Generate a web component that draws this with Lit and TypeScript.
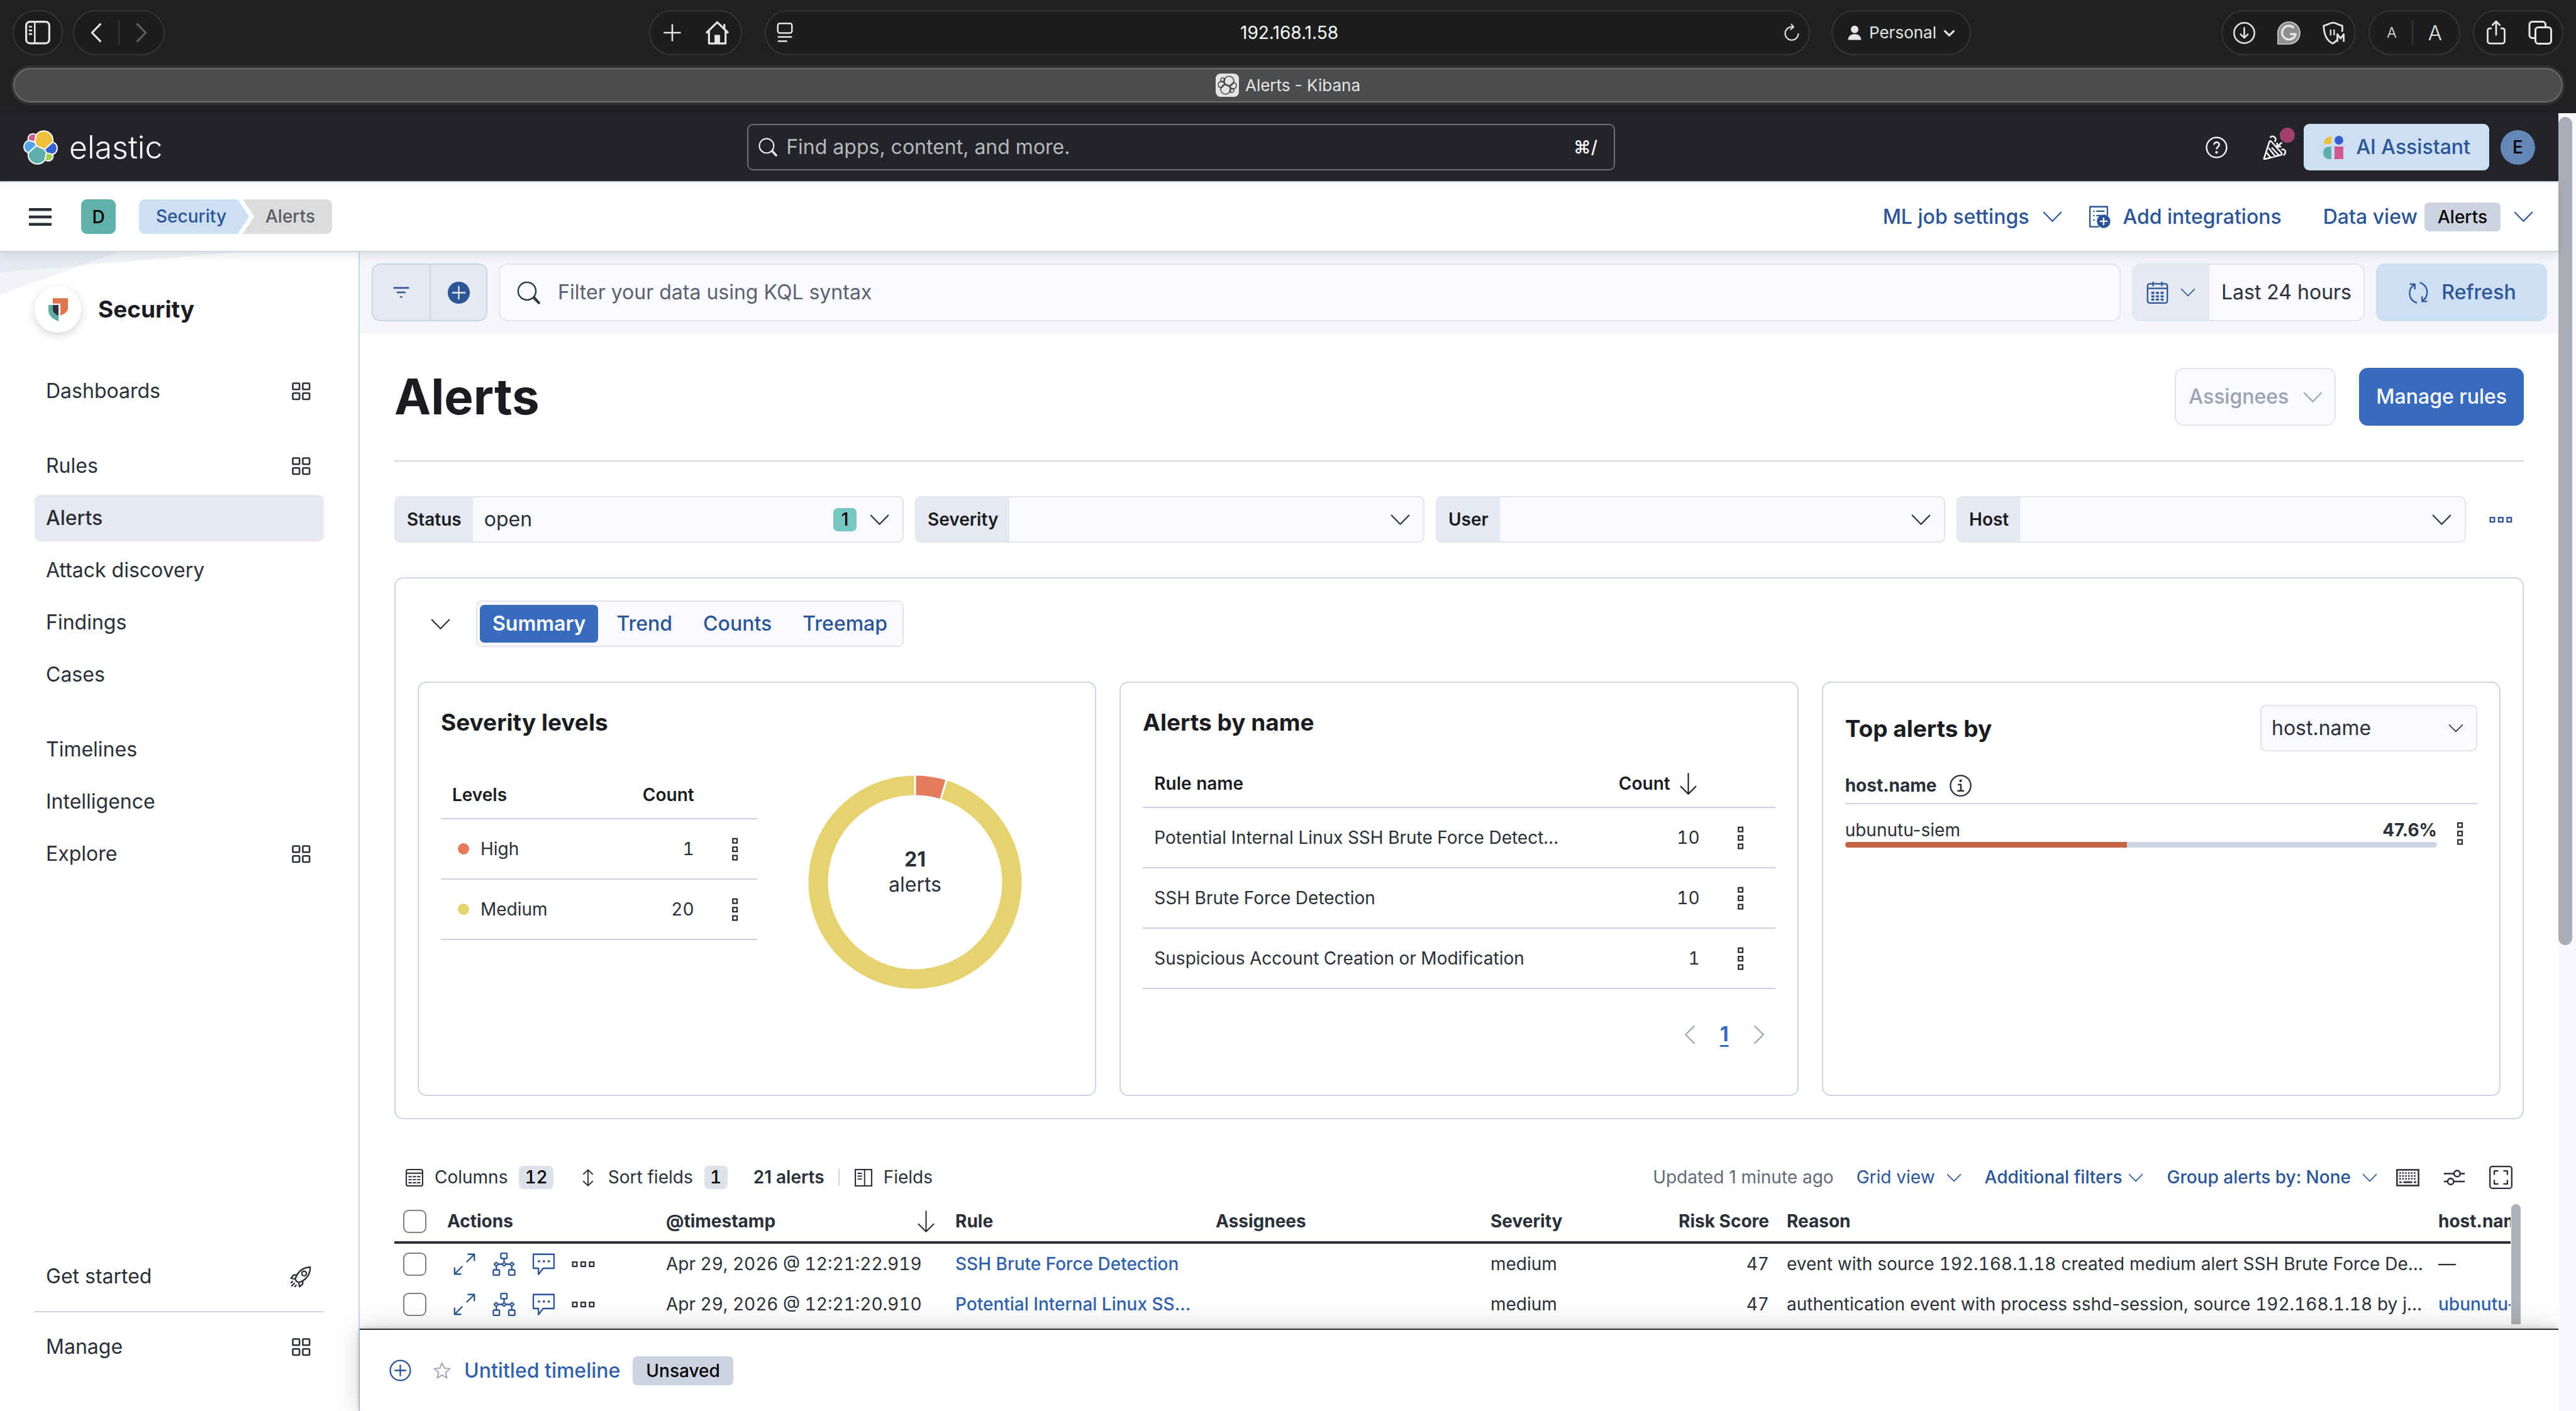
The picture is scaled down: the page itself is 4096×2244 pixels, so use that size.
import { LitElement, html, svg, css, nothing, type TemplateResult, type SVGTemplateResult } from "lit";
import { customElement } from "lit/decorators.js";

/* ---------- icons ---------- */

const line = (d: string, w = 1) =>
  svg`<path d=${d} fill="none" stroke="currentColor" stroke-width=${w} stroke-linejoin="round"></path>`;
const solid = (d: string) => svg`<path d=${d} fill="currentColor"></path>`;
const box = (x: number, y: number, w: number, h: number, r = 0, sw = 1) =>
  svg`<rect x=${x} y=${y} width=${w} height=${h} rx=${r} fill="none" stroke="currentColor" stroke-width=${sw}></rect>`;

const glyphs: Record<string, SVGTemplateResult> = {
  chevDown: line("M1.8 4.8 8 11.1l6.2-6.3", 0.9),
  chevLeft: line("M10.6 1.8 4.4 8l6.2 6.2", 0.9),
  chevRight: line("M5.4 1.8 11.6 8l-6.2 6.2", 0.9),
  arrowDown: line("M8 .6v14.2M2.6 9.6 8 15l5.4-5.4", 0.9),
  menu: solid("M0 1.8h16v2H0zM0 7h16v2H0zM0 12.2h16v2H0z"),
  apps: svg`${box(2.4, 2.4, 4.6, 4.2, 0.6, 1.1)}${box(9.3, 2.4, 4.6, 4.2, 0.6, 1.1)}${box(2.4, 9.2, 4.6, 4.2, 0.6, 1.1)}${box(9.3, 9.2, 4.6, 4.2, 0.6, 1.1)}`,
  search: svg`<circle cx="6.9" cy="6.9" r="6.1" fill="none" stroke="currentColor" stroke-width="1"></circle>${line("M11.1 11.6 15 15.5l.5-.5-3.7-4.3", 0.9)}`,
  filter: solid("M1 3.2h14v1.5H1zM4 7.3h8v1.4H4zM7 11.4h2v1.4H7z"),
  plusSolid: svg`<circle cx="8" cy="8" r="7.6" fill="currentColor"></circle><path d="M8 3.4v9.2M3.4 8h9.2" stroke="#e6e9f2" stroke-width="1"></path>`,
  plusCircle: svg`<circle cx="8" cy="8" r="6.9" fill="none" stroke="currentColor"></circle>${line("M8 4v8M4 8h8")}`,
  calendar: svg`${box(1.2, 1.9, 13.6, 13.2, 1.4)}${line("M1.2 5h13.6M5 .4v3.2M11 .4v3.2")}${solid("M3.8 7.4h2v1.5h-2zM7 7.4h2v1.5H7zM10.2 7.4h2v1.5h-2zM3.8 9.8h2v1.4h-2zM7 9.8h2v1.4H7zM10.2 9.8h2v1.4h-2zM3.8 12h2v1.4h-2zM7 12h2v1.4H7zM10.2 12h2v1.4h-2z")}`,
  refresh: svg`${line("M2 2.1h3.5v3.6M5.3 2.4A7 7 0 0 0 5 14.2l2 .8")}${line("M14 14h-3.5v-3.5M10.6 13.7A7 7 0 0 0 11 2L9 1")}`,
  help: svg`<circle cx="8" cy="8" r="6.9" fill="none" stroke="currentColor" stroke-width="1"></circle>${line("M6.3 6.2c0-2.4 3.5-2.4 3.5 0C9.8 7.6 8 7.6 8 9.2", 1.1)}<circle cx="8" cy="11.4" r=".9" fill="currentColor"></circle>`,
  cheer: svg`${line("M1.6 15.2 5 4.6c.2-.6.8-.7 1.2-.2l6.4 7.2c.5.6.3 1.2-.4 1.4L2.2 15.6c-.6.1-.8 0-.6-.4ZM3.4 11.6l2.2 3M4.6 8.6l4 5.2M6.4 8.2l4.6 5", 1)}${line("M5.4 1.9c2-1.9 4.6.2 3 2.7M9.9 5.2v2.5h2.6M10 7.6l3-2.6M12.6 9.6c2.6-1 3.6 2 1.2 3.6", 1)}`,
  addData: svg`${line("M8 15H1.8V1.2h12v6M4 4.3h1M6.2 4.3h5.6M4 7.3h1M6.2 7.3h3.6M4 10.3h1", 1)}<circle cx="11.2" cy="11.2" r="4.6" fill="currentColor"></circle><path d="M11.2 8.6v5.2M8.6 11.2h5.2" stroke="#fff" stroke-width="1"></path>`,
  dotsV: svg`${box(6.6, 0.8, 2.9, 2.9)}${box(6.6, 6.6, 2.9, 2.9)}${box(6.6, 12.4, 2.9, 2.9)}`,
  dotsH: svg`${box(0.7, 6.6, 2.9, 2.9)}${box(6.5, 6.6, 2.9, 2.9)}${box(12.3, 6.6, 2.9, 2.9)}`,
  info: svg`<circle cx="8" cy="8" r="7" fill="none" stroke="currentColor"></circle>${line("M6.2 7.2h2v4.4M5.8 11.6h4.6", 1.1)}<circle cx="8" cy="4.6" r=".95" fill="currentColor"></circle>`,
  table: svg`${box(0.6, 0.6, 14.8, 14.8, 1.6, 1.2)}${line("M.6 3.9h14.8", 1.2)}<path d="M2.6 7h10.8M2.6 9.8h10.8M2.6 12.6h10.8" stroke="currentColor" stroke-width="1.1" stroke-dasharray="3 .9"></path>`,
  sort: line("M8 .8v14.4M3.6 5 8 .8 12.4 5M3.6 11 8 15.2l4.4-4.2", 1.1),
  fields: svg`${box(0.6, 0.6, 14.8, 14.8, 0, 1.2)}${line("M9 .6v14.8M2.6 4h4M2.6 6.6h4M2.6 9.2h4", 1.1)}`,
  keyboard: svg`${box(0.6, 2.8, 14.8, 10.8, 0, 1.1)}<path d="M2.2 5h11.6M2.2 7h11.6M2.2 9h11.6" stroke="currentColor" stroke-width="1.1" stroke-dasharray="1.1 .9"></path>${line("M2.2 11.3h1.6M5 11.3h6M12.2 11.3h1.6", 1.1)}`,
  controls: svg`${line("M.8 5.4h7M12 5.4h3.2M.8 10.8h2.6M7.6 10.8h7.6", 1.1)}<circle cx="9.9" cy="5.4" r="2.1" fill="none" stroke="currentColor" stroke-width="1.1"></circle><circle cx="5.5" cy="10.8" r="2.1" fill="none" stroke="currentColor" stroke-width="1.1"></circle>`,
  fullscreen: svg`${box(0.5, 0.5, 15, 15, 1.6, 1)}${line("M3.5 6.3V3.5h2.8M9.7 3.5h2.8v2.8M12.5 9.7v2.8H9.7M6.3 12.5H3.5V9.7", 1)}`,
  expand: line("M10.2 1.2h4.6v4.6M14.6 1.4 9.4 6.6M5.8 14.8H1.2v-4.6M1.4 14.6l5.2-5.2", 1),
  analyze: svg`${box(5.8, 0.5, 4.2, 3.6, 0.5)}${box(0.6, 11.9, 4.2, 3.6, 0.5)}${box(11.2, 11.9, 4.2, 3.6, 0.5)}${line("M8 4.1v2.6M2.7 9.2v2.7M13.3 9.2v2.7M3.8 8h2.8M9.4 8h2.8")}${line("M1.2 8l1.4-1.3L4 8 2.6 9.3zM6.6 8 8 6.7 9.4 8 8 9.3zM12 8l1.4-1.3L14.8 8l-1.4 1.3z")}`,
  comment: svg`${line("M.9 1.2h14.2v9.6H7.6L4.4 15v-4.2H.9Z", 1)}<path d="M4 6h8.4" stroke="currentColor" stroke-width="1.5" stroke-dasharray="1.5 1.9"></path>`,
  star: line("M8 1.4l1.9 4.4 4.7.4-3.6 3.2 1.1 4.7L8 11.6l-4.1 2.5L5 9.4 1.4 6.2l4.7-.4z", 1),
  rocket: svg`${line("M5 11.2 4 9.6C5.6 5 8.8 1.6 14.4 1.4 14.4 7 11 10.4 6.6 12zM5.6 6.6 2.8 6.9 1.2 9l2.8.6M9.4 10.4l-.3 2.8L7 14.8l-.6-2.8", 1)}<circle cx="10.2" cy="5.8" r="1.6" fill="none" stroke="currentColor"></circle>${line("M3.8 12.2 1.4 14.6M2.4 11 1 12.4M5 13.6l-1.4 1.4", 1)}`,

  /* browser toolbar */
  panel: svg`${box(1, 1.4, 14, 13, 2.2, 1.2)}${line("M6.2 1.4v13", 1)}${line("M2.6 4.4h2M2.6 6.6h2M2.6 8.8h2", 1)}`,
  back: line("M10.8 1.6 4.6 8l6.2 6.4", 1.4),
  forward: line("M5.2 1.6 11.4 8l-6.2 6.4", 1.4),
  plus: line("M8 1.6v12.8M1.6 8h12.8", 1.2),
  home: svg`${line("M.8 8 8 1l7.2 7M2.6 6.6v8.2h10.8V6.6M12.6 2.2v3", 1.3)}${solid("M6.2 9.2h3.6v5.4H6.2z")}`,
  reader: svg`${box(3, 1.4, 10, 6.8, 1.4, 1.1)}${line("M3 11h10M3 14h6.6", 1.1)}`,
  reload: line("M9 3.2A5.6 5.6 0 1 0 13.6 8.6M7.4.6l2.2 2.6-2.8 2.2", 1.1),
  person: solid("M8 1a3.3 3.3 0 0 1 0 7.4A3.5 3.5 0 0 1 8 1zM1.6 15c0-7.4 12.8-7.4 12.8 0z"),
  caret: line("M2 5l6 6 6-6", 2.4),
  download: svg`<circle cx="8" cy="8" r="7" fill="none" stroke="currentColor" stroke-width="1.1"></circle>${line("M8 4v7.2M5.2 8.6 8 11.3l2.8-2.7", 1.1)}`,
  grammar: svg`<path d="M8 .4a7.6 7.6 0 1 1 0 15.2H.4V8A7.6 7.6 0 0 1 8 .4z" fill="#8d8e8e" stroke="#e4e5e5" stroke-width=".6"></path>${line("M11.4 4.5A4.7 4.7 0 1 0 12.6 8.8H8.8", 1.5)}`,
  shield: svg`${line("M10.6 12.6C9.8 13.6 9 14.4 7.4 15.2 3.6 13.4 1.4 9 1.2 3 3.4 2.8 5.4.9 7.6.9S11.8 2.8 14 3c.2 1.4.2 2.6-.2 4.2", 1.2)}${line("M6 5.6v4M8.4 5.6v4", 1)}${line("M10.6 14V8.8l2.2 3 2.2-3V14", 1.2)}`,
  share: svg`${line("M5.2 5.2H4a1.4 1.4 0 0 0-1.4 1.4v6.8A1.4 1.4 0 0 0 4 14.8h8a1.4 1.4 0 0 0 1.4-1.4V6.6A1.4 1.4 0 0 0 12 5.2h-1.2M8 9.8V.9M5.4 3.4 8 .8l2.6 2.6", 1.1)}`,
  tabs: svg`${box(5, 4.6, 10, 10.4, 1.8, 1.2)}${line("M5 11.4H3a1.8 1.8 0 0 1-1.8-1.8V2.8A1.8 1.8 0 0 1 3 1h6.6a1.8 1.8 0 0 1 1.8 1.8v1.8", 1.2)}`,
};

const icon = (name: string, size = 37) =>
  html`<svg class="icon" width=${size} height=${size} viewBox="0 0 16 16" aria-hidden="true">${glyphs[name]}</svg>`;

const clusterShapes: [string, string][] = [
  ["#efbf3b", "M12.58 13.787l7.002 3.211 7.066-6.213c.102-.512.152-1.025.152-1.557 0-4.338-3.54-7.863-7.871-7.863a7.86 7.86 0 0 0-6.484 3.417l-1.176 6.133z"],
  ["#5fafae", "M5.333 21.228a7.96 7.96 0 0 0-.152 1.58c0 4.35 3.526 7.875 7.877 7.875 2.605 0 5.042-1.296 6.507-3.468l1.166-6.105-1.556-2.986-7.03-3.21z"],
  ["#d0588e", "M5.288 9.066l4.8 1.137 1.051-5.478a3.79 3.79 0 0 0-2.298-.779c-2.09 0-3.79 1.7-3.79 3.79 0 .452.08.908.237 1.33z"],
  ["#57a1ea", "M4.871 10.212c-2.143.71-3.64 2.777-3.64 5.035 0 2.2 1.358 4.163 3.399 4.942l6.733-6.108-1.236-2.651z"],
  ["#a2cf4b", "M20.862 27.144a3.8 3.8 0 0 0 2.285.78 3.791 3.791 0 0 0 3.785-3.79c0-.456-.08-.912-.236-1.318l-4.793-1.123z"],
  ["#355fd0", "M21.849 20.524l5.276 1.237a5.33 5.33 0 0 0 3.64-5.04c0-2.194-1.36-4.156-3.404-4.936l-6.903 6.06z"],
];

const elasticMark = html`<svg class="icon" width="55" height="55" viewBox="0 0 32 32" aria-hidden="true">
  ${clusterShapes.map(([, d]) => svg`<path d=${d} fill="#fff" stroke="#fff" stroke-width="2.4" stroke-linejoin="round"></path>`)}
  ${clusterShapes.map(([c, d]) => svg`<path d=${d} fill=${c}></path>`)}
</svg>`;

const favicon = html`<svg class="icon" width="37" height="37" viewBox="-3 -3 38 38" aria-hidden="true">
  <rect x="-3" y="-3" width="38" height="38" rx="8" fill="#e2e3e3"></rect>
  ${clusterShapes.map(([, d]) => svg`<path d=${d} fill="#e2e3e3" stroke="#46484a" stroke-width="1.6" stroke-linejoin="round"></path>`)}
</svg>`;

const securityMark = html`<svg class="icon" width="31" height="37" viewBox="0 0 27 32" aria-hidden="true">
  <path d="M6 0H27V13.5C27 18.5 22.5 22 16.6 24V7.6H6Z" fill="#dd754e"></path>
  <path d="M0 9.4H6V16C6 19.8 9.6 22.6 14 24.4V32C6 29 0 24 0 16.6Z" fill="#5cada3"></path>
  <path d="M6 9.4H14V24.4C9.6 22.6 6 19.8 6 16Z" fill="#30333d"></path>
</svg>`;

const assistantMark = html`<svg class="icon" width="33" height="37" viewBox="0 0 33 37" aria-hidden="true">
  <path d="M14 1v12H2C2 6 7 1 14 1Z" fill="#efbf3b"></path>
  <circle cx="26" cy="7" r="7" fill="#355fd0"></circle>
  <path d="M14 17v20H11C5 37 1 33 1 27s4-10 10-10Z" fill="#5fafae"></path>
  <path d="M19 17h14v20H19Z" fill="#d0588e"></path>
</svg>`;

/* ---------- data ---------- */

interface NavItem { label: string; apps?: boolean; active?: boolean }

const navGroups: NavItem[][] = [
  [{ label: "Dashboards", apps: true }],
  [
    { label: "Rules", apps: true },
    { label: "Alerts", active: true },
    { label: "Attack discovery" },
    { label: "Findings" },
    { label: "Cases" },
  ],
  [{ label: "Timelines" }, { label: "Intelligence" }, { label: "Explore", apps: true }],
];

const filters = [
  { label: "Status", value: "open", count: 1 },
  { label: "Severity", value: "", count: 0 },
  { label: "User", value: "", count: 0 },
  { label: "Host", value: "", count: 0 },
];

const levels = [
  { name: "High", count: 1, cls: "high" },
  { name: "Medium", count: 20, cls: "medium" },
];

const rules = [
  { name: "Potential Internal Linux SSH Brute Force Detected", count: 10 },
  { name: "SSH Brute Force Detection", count: 10 },
  { name: "Suspicious Account Creation or Modification", count: 1 },
];

const hosts = [{ name: "ubunutu-siem", percent: 47.6 }];

const alerts = [
  {
    time: "Apr 29, 2026 @ 12:21:22.919",
    rule: "SSH Brute Force Detection",
    severity: "medium",
    risk: 47,
    reason: ["event with source ", "192.168.1.18", " created medium alert SSH Brute Force De…"],
    host: "",
  },
  {
    time: "Apr 29, 2026 @ 12:21:20.910",
    rule: "Potential Internal Linux SSH Brute Force Detected",
    severity: "medium",
    risk: 47,
    reason: ["authentication event with process sshd-session, source ", "192.168.1.18", " by j…"],
    host: "ubunutu-siem",
  },
];

/* ---------- shared styles ---------- */

const base = css`
  :host {
    display: block;
    font-family: Inter, "Liberation Sans", sans-serif;
    font-size: 32px;
    line-height: 46px;
    color: #2b2f38;
  }
  * { box-sizing: border-box; }
  button, input, select {
    font: inherit;
    color: inherit;
    background: none;
    border: 0;
    margin: 0;
    padding: 0;
  }
  button {
    display: flex;
    align-items: center;
    white-space: nowrap;
  }
  a { color: inherit; text-decoration: none; }
  h1, h2, ul { margin: 0; padding: 0; }
  ul { list-style: none; }
  table { border-spacing: 0; table-layout: fixed; }
  th { text-align: left; }
  .icon { display: block; flex: none; }
  .blue { color: #2b5596; }
  .link { color: #3061ab; font-weight: 500; }
  .grow { flex: 1; }
`;

/* ---------- browser frame ---------- */

@customElement("browser-bar")
export class BrowserBar extends LitElement {
  static styles = [
    base,
    css`
      :host { background: #1f2022; color: #e4e5e5; font-size: 26px; line-height: 32px; }
      .bar { display: flex; align-items: center; height: 104px; padding: 0 20px; }
      .side { display: flex; gap: 16px; flex: none; width: 1012px; }
      .side.end { justify-content: flex-end; gap: 20px; width: 942px; }
      .pill {
        display: flex;
        align-items: center;
        justify-content: center;
        height: 72px;
        flex: none;
        border: 2px solid #343537;
        border-radius: 36px;
        background: #1c1e1d;
      }
      .toggle { width: 80px; }
      .nav { width: 146px; gap: 16px; }
      .rule { width: 2px; height: 40px; background: #343537; }
      .dim { color: #5d5f60; }
      .new { width: 148px; gap: 35px; margin-right: 36px; }
      .address { flex: 1; padding: 0 12px; justify-content: space-between; margin-right: 34px; }
      .address input { flex: 1; min-width: 0; text-align: center; color: #fff; font-size: 28px; }
      .profile { width: 222px; }
      .profile button { gap: 10px; }
      .ext { width: 214px; gap: 34px; }
      .size { width: 146px; gap: 24px; font-weight: 300; }
      .small { font-size: 23px; }
      .large { font-size: 33px; }
      .out { width: 144px; gap: 30px; }
      .tabs { padding: 0 17px 13px; }
      .tab {
        display: flex;
        align-items: center;
        justify-content: center;
        gap: 10px;
        height: 63px;
        border: 4px solid #303133;
        border-radius: 32px;
        background: #4b4c4e;
        box-shadow: inset 0 0 0 2px #6a6b6d;
      }
    `,
  ];

  render() {
    return html`
      <div class="bar">
        <div class="side">
          <div class="pill toggle"><button aria-label="Show sidebar">${icon("panel", 42)}</button></div>
          <div class="pill nav">
            <button aria-label="Back">${icon("back", 36)}</button>
            <span class="rule"></span>
            <button class="dim" aria-label="Forward">${icon("forward", 36)}</button>
          </div>
        </div>
        <div class="pill new">
          <button aria-label="New tab">${icon("plus", 34)}</button>
          <button aria-label="Home">${icon("home", 39)}</button>
        </div>
        <div class="pill address">
          <button aria-label="Reader">${icon("reader", 36)}</button>
          <input aria-label="Address" value="192.168.1.58" />
          <button aria-label="Reload">${icon("reload", 30)}</button>
        </div>
        <div class="pill profile">
          <button>${icon("person", 26)}<span>Personal</span>${icon("caret", 21)}</button>
        </div>
        <div class="side end">
          <div class="pill ext">
            <button aria-label="Downloads">${icon("download", 37)}</button>
            <button aria-label="Writing assistant">${icon("grammar", 37)}</button>
            <button aria-label="Content blocker">${icon("shield", 37)}</button>
          </div>
          <div class="pill size">
            <button class="small">A</button>
            <span class="rule"></span>
            <button class="large">A</button>
          </div>
          <div class="pill out">
            <button aria-label="Share">${icon("share", 40)}</button>
            <button aria-label="Tab overview">${icon("tabs", 40)}</button>
          </div>
        </div>
      </div>
      <div class="tabs"><div class="tab">${favicon}<span>Alerts - Kibana</span></div></div>
    `;
  }
}

/* ---------- global headers ---------- */

@customElement("app-header")
export class AppHeader extends LitElement {
  static styles = [
    base,
    css`
      :host { position: relative; z-index: 2; }
      .top {
        display: flex;
        align-items: center;
        justify-content: space-between;
        height: 110px;
        padding: 0 37px;
        background: #232429;
        border-bottom: 2px solid #cdd5e3;
        color: #fff;
      }
      .brand { display: flex; align-items: center; gap: 18px; min-width: 232px; font-size: 50px; font-weight: 300; }
      .find {
        display: flex;
        align-items: center;
        gap: 14px;
        width: 1380px;
        height: 74px;
        padding: 0 26px 0 16px;
        border: 2px solid #6d6e72;
        border-radius: 9px;
      }
      .find input { flex: 1; min-width: 0; }
      .find input::placeholder { color: #b6b7bb; opacity: 1; }
      .keys { font-size: 28px; font-weight: 500; }
      .tools { display: flex; align-items: center; }
      .tool { position: relative; justify-content: center; width: 74px; height: 74px; margin-right: 18px; }
      .news { margin-right: 10px; }
      .dot { position: absolute; top: 6px; right: 4px; width: 24px; height: 24px; border-radius: 50%; background: #a0426c; }
      .assistant {
        gap: 20px;
        height: 74px;
        padding: 0 30px;
        border-radius: 9px;
        background: #cddff3;
        color: #2b5596;
        font-weight: 500;
      }
      .avatar {
        justify-content: center;
        width: 55px;
        height: 55px;
        margin-left: 18px;
        border-radius: 50%;
        background: #6388b8;
        color: #000;
        font-size: 28px;
        font-weight: 500;
      }
      .sub {
        display: flex;
        align-items: center;
        height: 111px;
        padding: 0 37px 0 46px;
        background: #fff;
        border-bottom: 2px solid #cdd5e3;
        box-shadow: 0 4px 16px rgba(43, 57, 79, 0.12);
        font-weight: 500;
      }
      .space {
        justify-content: center;
        width: 55px;
        height: 55px;
        margin: 0 37px 0 47px;
        border-radius: 9px;
        background: #60b1a9;
        color: #000;
        font-size: 28px;
      }
      .crumbs { display: flex; font-size: 28px; line-height: 55px; }
      .crumb { padding: 0 36px 0 27px; background: #cddff3; border-radius: 9px 0 0 9px; clip-path: polygon(0 0, calc(100% - 18px) 0, 100% 50%, calc(100% - 18px) 100%, 0 100%); }
      .crumb.last { margin-left: -10px; padding: 0 27px 0 36px; background: #dcdcde; color: #5a5c62; border-radius: 0 9px 9px 0; clip-path: polygon(0 0, 100% 0, 100% 100%, 0 100%, 18px 50%); }
      .action { gap: 19px; margin-left: 37px; }
      .views { margin-left: 66px; gap: 0; }
      .badge { margin: 0 18px 0 11px; padding: 0 21px; border-radius: 7px; background: #cdd3e1; color: #000; font-size: 28px; line-height: 46px; }
    `,
  ];

  render() {
    return html`
      <header class="top">
        <a class="brand" href="#">${elasticMark}<span>elastic</span></a>
        <label class="find">
          ${icon("search", 30)}
          <input type="search" placeholder="Find apps, content, and more." aria-label="Find apps, content, and more." />
          <span class="keys">⌘/</span>
        </label>
        <div class="tools">
          <button class="tool" aria-label="Help">${icon("help")}</button>
          <button class="tool news" aria-label="News">${icon("cheer", 40)}<span class="dot"></span></button>
          <button class="assistant">${assistantMark}AI Assistant</button>
          <button class="avatar">E</button>
        </div>
      </header>
      <div class="sub">
        <button aria-label="Toggle navigation">${icon("menu", 36)}</button>
        <button class="space">D</button>
        <nav class="crumbs">
          <a class="crumb blue" href="#">Security</a>
          <a class="crumb last" href="#">Alerts</a>
        </nav>
        <span class="grow"></span>
        <button class="action blue">ML job settings${icon("chevDown")}</button>
        <button class="action blue">${icon("addData")}Add integrations</button>
        <button class="action views blue">Data view<span class="badge">Alerts</span>${icon("chevDown")}</button>
      </div>
    `;
  }
}

/* ---------- side navigation ---------- */

@customElement("side-nav")
export class SideNav extends LitElement {
  static styles = [
    base,
    css`
      :host { flex: none; width: 572px; border-right: 2px solid #cdd5e3; background: #fff; }
      .nav { position: relative; display: flex; flex-direction: column; height: 100%; padding: 54px 55px 65px; }
      .rays { position: absolute; top: 0; left: 0; }
      .solution { position: relative; display: flex; align-items: center; gap: 27px; margin-bottom: 56px; font-size: 37px; font-weight: 700; color: #1a1c21; }
      .disc {
        display: flex;
        align-items: center;
        justify-content: center;
        width: 74px;
        height: 74px;
        border-radius: 50%;
        background: #fff;
        box-shadow: 0 4px 14px rgba(43, 57, 79, 0.22);
      }
      .group { display: flex; flex-direction: column; gap: 9px; margin-bottom: 45px; }
      .item { display: flex; align-items: center; justify-content: space-between; height: 74px; padding: 0 18px; border-radius: 9px; }
      .active { background: #e6e9f2; font-weight: 500; }
      .foot { margin-top: auto; }
      .sep { height: 2px; margin: 18px 0; background: #cdd5e3; }
    `,
  ];

  private item({ label, apps, active }: NavItem) {
    return html`<li><a class="item ${active ? "active" : ""}" href="#">${label}${apps ? icon("apps") : nothing}</a></li>`;
  }

  render() {
    return html`
      <nav class="nav">
        <svg class="rays" width="400" height="70" viewBox="0 0 400 70" aria-hidden="true">
          <path d="M0 0H188L0 68Z" fill="#b7c2d8" fill-opacity=".2"></path>
          <path d="M0 0H379L0 32Z" fill="#b7c2d8" fill-opacity=".2"></path>
        </svg>
        <div class="solution"><span class="disc">${securityMark}</span>Security</div>
        ${navGroups.map((g) => html`<ul class="group">${g.map((i) => this.item(i))}</ul>`)}
        <div class="foot">
          <a class="item" href="#">Get started${icon("rocket")}</a>
          <div class="sep"></div>
          <a class="item" href="#">Manage${icon("apps")}</a>
        </div>
      </nav>
    `;
  }
}

/* ---------- query bar ---------- */

@customElement("query-bar")
export class QueryBar extends LitElement {
  static styles = [
    base,
    css`
      .bar { display: flex; gap: 18px; padding: 18px 18px 19px 19px; background: #f5f6fa; }
      .pair { display: flex; height: 92px; border: 2px solid #ccd3e3; border-radius: 14px; background: #e6e9f2; color: #2b5596; }
      .pair button { justify-content: center; width: 90px; }
      .pair button + button { border-left: 2px solid #ccd3e3; }
      .kql, .date { display: flex; align-items: center; height: 92px; border: 2px solid #e2e5eb; border-radius: 14px; background: #f9fafe; overflow: hidden; }
      .kql { flex: 1; gap: 28px; padding: 0 27px; }
      .kql input { flex: 1; min-width: 0; }
      .kql input::placeholder { color: #5c6170; opacity: 1; }
      .quick { gap: 16px; height: 92px; padding: 0 20px; background: #e6e9f2; color: #2b5596; }
      .range { padding: 0 19px; }
      .refresh { justify-content: center; gap: 18px; width: 272px; height: 92px; border-radius: 14px; background: #cddff3; color: #2b5596; font-weight: 500; }
    `,
  ];

  render() {
    return html`
      <div class="bar">
        <div class="pair">
          <button aria-label="Saved query menu">${icon("filter", 28)}</button>
          <button aria-label="Add filter">${icon("plusSolid")}</button>
        </div>
        <label class="kql">
          ${icon("search")}
          <input type="text" placeholder="Filter your data using KQL syntax" aria-label="Filter your data using KQL syntax" />
        </label>
        <div class="date">
          <button class="quick" aria-label="Date quick select">${icon("calendar")}${icon("chevDown", 28)}</button>
          <button class="range">Last 24 hours</button>
        </div>
        <button class="refresh">${icon("refresh")}Refresh</button>
      </div>
    `;
  }
}

/* ---------- summary panel ---------- */

@customElement("summary-panel")
export class SummaryPanel extends LitElement {
  static styles = [
    base,
    css`
      .panel { padding: 35px; border: 2px solid #cdd5e6; border-radius: 14px; }
      .tabs { display: flex; align-items: center; gap: 37px; margin-bottom: 55px; }
      .fold { justify-content: center; width: 55px; margin: 0 1px 0 9px; }
      .set { display: flex; gap: 9px; padding: 5px 4px; border: 2px solid #e2e5eb; border-radius: 9px; background: #f9fafe; margin-left: -9px; }
      .set button { height: 60px; padding: 0 20px; border-radius: 7px; color: #2b5596; font-weight: 500; }
      .set .on { background: #386bbe; color: #fff; font-weight: 600; }
      .cards { display: grid; grid-template-columns: repeat(3, minmax(0, 1fr)); gap: 37px; min-height: 659px; }
      .card { display: flex; flex-direction: column; padding: 35px; border: 2px solid #cdd5e6; border-radius: 14px; }
      h2 { font-size: 37px; line-height: 55px; font-weight: 700; color: #1a1c21; }
      table { width: 100%; font-size: 28px; line-height: 37px; font-feature-settings: "tnum"; }
      th, td { height: 96px; padding: 0 18px; border-bottom: 2px solid #cdd3e3; overflow: hidden; text-overflow: ellipsis; white-space: nowrap; }
      th { height: 75px; color: #1a1c21; font-weight: 600; }
      .num { text-align: right; }
      .more { display: flex; align-items: center; justify-content: center; width: 37px; }
      .split { display: grid; grid-template-columns: 1fr 1fr; margin-top: 52px; }
      .cCount { width: 200px; }
      .cAct { width: 82px; }
      td.act { padding: 0 0 0 28px; }
      .level { display: flex; align-items: center; gap: 18px; padding-left: 9px; }
      .level::before { content: ""; width: 18px; height: 18px; border-radius: 50%; background: #e47b5c; }
      .level.medium::before { background: #e6d26f; }
      .donut { justify-self: center; margin-top: 5px; }
      .big { font-size: 32px; font-weight: 700; text-anchor: middle; fill: #2b2f38; }
      .sub { font-size: 32px; text-anchor: middle; fill: #2b2f38; }
      .rules { margin-top: 34px; }
      .cNum { width: 223px; }
      .cDots { width: 102px; }
      .sorted { display: flex; align-items: center; justify-content: flex-end; gap: 10px; }
      .pager { display: flex; justify-content: flex-end; align-items: center; gap: 28px; margin: 49px 9px 0 0; color: #9aa1b3; }
      .page { color: #386bbe; font-weight: 700; text-decoration: underline; text-underline-offset: 6px; text-decoration-thickness: 3px; }
      .head { display: flex; align-items: center; justify-content: space-between; }
      .pick { position: relative; display: flex; align-items: center; width: 345px; height: 74px; border: 2px solid #e2e5eb; border-radius: 9px; background: #f9fafe; }
      .pick select { appearance: none; width: 100%; height: 100%; padding: 0 60px 0 16px; }
      .pick .icon { position: absolute; right: 18px; pointer-events: none; }
      .field { display: flex; align-items: center; gap: 20px; margin-top: 36px; padding-bottom: 9px; border-bottom: 2px solid #cdd5e3; font-size: 28px; line-height: 37px; font-weight: 700; }
      .host { display: flex; align-items: center; gap: 18px; margin-top: 23px; padding-right: 9px; font-size: 28px; line-height: 37px; }
      .meter { flex: 1; }
      .names { display: flex; justify-content: space-between; }
      .track { height: 9px; border-radius: 5px; background: #cdd5e2; overflow: hidden; }
      .fill { height: 100%; background: #c56343; }
    `,
  ];

  private dots(label: string) {
    return html`<button class="more" aria-label=${label}>${icon("dotsV")}</button>`;
  }

  private severity() {
    const total = levels.reduce((n, l) => n + l.count, 0);
    const cut = (levels[0].count / total) * 360;
    const arc = (from: number, to: number, color: string) => svg`
      <circle cx="170" cy="170" r="154" fill="none" stroke=${color} stroke-width="31" pathLength="360"
        stroke-dasharray="${to - from} 360" transform="rotate(${from - 90} 170 170)"></circle>`;
    return html`
      <section class="card">
        <h2>Severity levels</h2>
        <div class="split">
          <div>
            <table>
              <colgroup><col /><col class="cCount" /><col class="cAct" /></colgroup>
              <thead><tr><th>Levels</th><th class="num">Count</th><th></th></tr></thead>
              <tbody>
                ${levels.map((l) => html`<tr>
                  <td><span class="level ${l.cls}">${l.name}</span></td>
                  <td class="num">${l.count}</td>
                  <td class="act">${this.dots(`${l.name} actions`)}</td>
                </tr>`)}
              </tbody>
            </table>
          </div>
          <svg class="donut" width="340" height="340" viewBox="0 0 340 340" role="img" aria-label="21 alerts">
            ${arc(0.6, cut - 0.6, "#e47b5c")}${arc(cut + 0.6, 359.4, "#e6d26f")}
            <text class="big" x="170" y="145">${total}</text>
            <text class="sub" x="170" y="185">alerts</text>
          </svg>
        </div>
      </section>`;
  }

  private byName() {
    return html`
      <section class="card">
        <h2>Alerts by name</h2>
        <table class="rules">
          <colgroup><col /><col class="cNum" /><col class="cDots" /></colgroup>
          <thead><tr><th>Rule name</th><th><span class="sorted">Count ${icon("arrowDown")}</span></th><th></th></tr></thead>
          <tbody>
            ${rules.map((r) => html`<tr>
              <td>${r.name}</td>
              <td class="num">${r.count}</td>
              <td class="act">${this.dots(`${r.name} actions`)}</td>
            </tr>`)}
          </tbody>
        </table>
        <div class="pager">
          <button aria-label="Previous page">${icon("chevLeft")}</button>
          <a class="page" href="#">1</a>
          <button aria-label="Next page">${icon("chevRight")}</button>
        </div>
      </section>`;
  }

  private topBy() {
    return html`
      <section class="card">
        <div class="head">
          <h2>Top alerts by</h2>
          <div class="pick">
            <select aria-label="Top alerts by"><option>host.name</option></select>
            ${icon("chevDown", 28)}
          </div>
        </div>
        <div class="field">host.name ${icon("info")}</div>
        ${hosts.map((h) => html`<div class="host">
          <div class="meter">
            <div class="names"><span>${h.name}</span><b>${h.percent}%</b></div>
            <div class="track"><div class="fill" style="width:${h.percent}%"></div></div>
          </div>
          ${this.dots(`${h.name} actions`)}
        </div>`)}
      </section>`;
  }

  render() {
    return html`
      <div class="panel">
        <div class="tabs">
          <button class="fold" aria-label="Collapse summary">${icon("chevDown")}</button>
          <div class="set">
            <button class="on">Summary</button>
            <button>Trend</button>
            <button>Counts</button>
            <button>Treemap</button>
          </div>
        </div>
        <div class="cards">${this.severity()}${this.byName()}${this.topBy()}</div>
      </div>
    `;
  }
}

/* ---------- alerts grid ---------- */

@customElement("alerts-grid")
export class AlertsGrid extends LitElement {
  static styles = [
    base,
    css`
      :host { font-size: 28px; line-height: 37px; }
      .bar { display: flex; align-items: center; height: 37px; margin-bottom: 19px; padding: 0 18px; }
      .set { gap: 18px; margin-right: 41px; }
      .count { min-width: 37px; padding: 0 9px; border-radius: 7px; background: #dde2ea; color: #000; font-weight: 500; text-align: center; font-feature-settings: "tnum"; }
      .total { font-weight: 600; padding-right: 24px; margin-right: 24px; position: relative; }
      .total::after { content: ""; position: absolute; top: 5px; right: 0; width: 2px; height: 27px; background: #cdd5e3; }
      .updated { margin-right: 36px; color: #646a77; }
      .menu { gap: 16px; margin-right: 35px; color: #2b5596; }
      .menu.strong { font-weight: 500; }
      .menu.tight { gap: 8px; }
      .menu.end { margin-right: 28px; }
      .tool + .tool { margin-left: 37px; }
      .grid { display: flex; }
      .view { flex: 1; min-width: 0; overflow: hidden; }
      .thumb { flex: none; width: 15px; margin: 5px 5px 0 1px; border-radius: 8px 8px 0 0; background: #aeb1b9; }
      table { width: 3664px; }
      th, td { height: 64px; padding: 0 14px; overflow: hidden; text-overflow: ellipsis; white-space: nowrap; }
      th { height: 68px; border-bottom: 4px solid #2b2f38; font-weight: 700; }
      td.why { padding-right: 0; }
      .figures { font-feature-settings: "tnum"; }
      .cControl { width: 418px; }
      .cTime { width: 460px; }
      .cRule { width: 414px; }
      .cWho { width: 437px; }
      .cSev { width: 230px; }
      .cRisk { width: 241px; }
      .cWhy { width: 1036px; }
      .cHost { width: 428px; }
      .control { display: flex; align-items: center; gap: 26px; }
      .control .first { margin-right: 16px; }
      .named { gap: 33px; }
      .tick { appearance: none; flex: none; width: 37px; height: 37px; border: 2px solid #7d8088; border-radius: 9px; background: #fff; }
      .stamp { display: flex; justify-content: space-between; align-items: center; }
      .num { text-align: right; }
    `,
  ];

  render() {
    return html`
      <div class="bar">
        <button class="set">${icon("table", 28)}Columns<span class="count">12</span></button>
        <button class="set">${icon("sort", 28)}Sort fields<span class="count">1</span></button>
        <span class="total">21 alerts</span>
        <button class="set">${icon("fields", 28)}Fields</button>
        <span class="grow"></span>
        <span class="updated">Updated 1 minute ago</span>
        <button class="menu">Grid view${icon("chevDown", 28)}</button>
        <button class="menu strong tight">Additional filters${icon("chevDown", 28)}</button>
        <button class="menu strong end">Group alerts by: None${icon("chevDown", 28)}</button>
        <button class="tool" aria-label="Keyboard shortcuts">${icon("keyboard")}</button>
        <button class="tool" aria-label="Display options">${icon("controls")}</button>
        <button class="tool" aria-label="Full screen">${icon("fullscreen")}</button>
      </div>
      <div class="grid">
        <div class="view">
          <table>
            <colgroup>
              <col class="cControl" /><col class="cTime" /><col class="cRule" /><col class="cWho" />
              <col class="cSev" /><col class="cRisk" /><col class="cWhy" /><col class="cHost" />
            </colgroup>
            <thead>
              <tr>
                <th><div class="control named"><input class="tick" type="checkbox" aria-label="Select all alerts" />Actions</div></th>
                <th><div class="stamp">@timestamp${icon("arrowDown")}</div></th>
                <th>Rule</th>
                <th>Assignees</th>
                <th>Severity</th>
                <th class="num">Risk Score</th>
                <th>Reason</th>
                <th>host.name</th>
              </tr>
            </thead>
            <tbody>
              ${alerts.map((a) => html`<tr>
                <td>
                  <div class="control">
                    <input class="tick first" type="checkbox" aria-label="Select alert" />
                    <button class="blue" aria-label="View details">${icon("expand")}</button>
                    <button class="blue" aria-label="Analyze event">${icon("analyze")}</button>
                    <button class="blue" aria-label="Add note">${icon("comment")}</button>
                    <button aria-label="More actions">${icon("dotsH")}</button>
                  </div>
                </td>
                <td class="figures">${a.time}</td>
                <td class="link">${a.rule}</td>
                <td></td>
                <td>${a.severity}</td>
                <td class="num figures">${a.risk}</td>
                <td class="why">${a.reason[0]}<span class="figures">${a.reason[1]}</span>${a.reason[2]}</td>
                <td class=${a.host ? "link" : ""}>${a.host || "—"}</td>
              </tr>`)}
            </tbody>
          </table>
        </div>
        <div class="thumb"></div>
      </div>
    `;
  }
}

/* ---------- page ---------- */

@customElement("app-root")
export class AppRoot extends LitElement {
  static styles = [
    base,
    css`
      .app { display: flex; flex-direction: column; height: 100vh; overflow: hidden; background: #fff; }
      .window { display: flex; flex: 1; min-height: 0; }
      .kibana { display: flex; flex-direction: column; flex: 1; min-width: 0; }
      .gutter { flex: none; width: 28px; padding-top: 6px; background: #f8f9fd; }
      .thumb { width: 22px; height: 64%; border-radius: 11px; background: #aaadb6; }
      .body { display: flex; flex: 1; min-height: 0; }
      .main { display: flex; flex-direction: column; flex: 1; min-width: 0; }
      .page { flex: 1; min-height: 0; overflow: hidden; padding: 55px 55px 0; }
      .title { display: flex; align-items: center; gap: 37px; padding-bottom: 55px; border-bottom: 2px solid #cdd5e3; }
      h1 { flex: 1; font-size: 78px; line-height: 92px; font-weight: 700; color: #1a1c21; }
      .assign { gap: 20px; height: 92px; padding: 0 16px 0 20px; border: 2px solid #e2e5eb; border-radius: 14px; background: #f9fafe; color: #9aa1b3; font-weight: 500; }
      .manage { height: 92px; padding: 0 27px; border-radius: 14px; background: #386bbe; color: #fff; font-weight: 500; }
      .filters { display: flex; gap: 18px; margin: 55px 0; }
      .filter { display: flex; flex: 1; height: 74px; border: 2px solid #e2e5eb; border-radius: 9px; background: #f9fafe; overflow: hidden; }
      .filter label { padding: 0 18px; background: #e6e9f2; color: #1a1c21; font-size: 28px; line-height: 70px; font-weight: 600; }
      .filter button { flex: 1; gap: 18px; padding: 0 18px; }
      .value { flex: 1; text-align: left; }
      .count { min-width: 37px; padding: 0 9px; border-radius: 7px; background: #76c8c0; color: #000; font-size: 28px; line-height: 37px; font-weight: 500; text-align: center; }
      .extra { justify-content: center; width: 74px; color: #2b5596; }
      summary-panel { margin-bottom: 74px; }
      .timeline {
        position: relative;
        display: flex;
        align-items: center;
        flex: none;
        height: 131px;
        padding-left: 46px;
        border-top: 2px solid #2b2f38;
        background: #fff;
        box-shadow: 0 0 44px rgba(0, 0, 0, 0.18), 0 0 8px rgba(0, 0, 0, 0.2);
        clip-path: inset(-80px 0 0 -80px);
      }
      .star { margin: 0 20px 0 33px; color: #9aa1b3; }
      .unsaved { margin-left: 20px; padding: 0 21px; border-radius: 7px; background: #cdd3e1; color: #000; font-size: 28px; line-height: 46px; font-weight: 500; }
    `,
  ];

  private filter(f: { label: string; value: string; count: number }): TemplateResult {
    const id = `filter-${f.label.toLowerCase()}`;
    return html`<div class="filter">
      <label for=${id}>${f.label}</label>
      <button id=${id}>
        <span class="value">${f.value}</span>
        ${f.count ? html`<span class="count">${f.count}</span>` : nothing}
        ${icon("chevDown")}
      </button>
    </div>`;
  }

  render() {
    return html`
      <div class="app">
        <browser-bar></browser-bar>
        <div class="window">
          <div class="kibana">
            <app-header></app-header>
            <div class="body">
              <side-nav></side-nav>
              <div class="main">
                <query-bar></query-bar>
                <main class="page">
                  <div class="title">
                    <h1>Alerts</h1>
                    <button class="assign" disabled>Assignees${icon("chevDown")}</button>
                    <button class="manage">Manage rules</button>
                  </div>
                  <div class="filters">
                    ${filters.map((f) => this.filter(f))}
                    <button class="extra" aria-label="More filter options">${icon("dotsH")}</button>
                  </div>
                  <summary-panel></summary-panel>
                  <alerts-grid></alerts-grid>
                </main>
                <div class="timeline">
                  <button class="blue" aria-label="New timeline">${icon("plusCircle")}</button>
                  <button class="star" aria-label="Add to favorites">${icon("star", 30)}</button>
                  <a class="link" href="#">Untitled timeline</a>
                  <span class="unsaved">Unsaved</span>
                </div>
              </div>
            </div>
          </div>
          <div class="gutter"><div class="thumb"></div></div>
        </div>
      </div>
    `;
  }
}
